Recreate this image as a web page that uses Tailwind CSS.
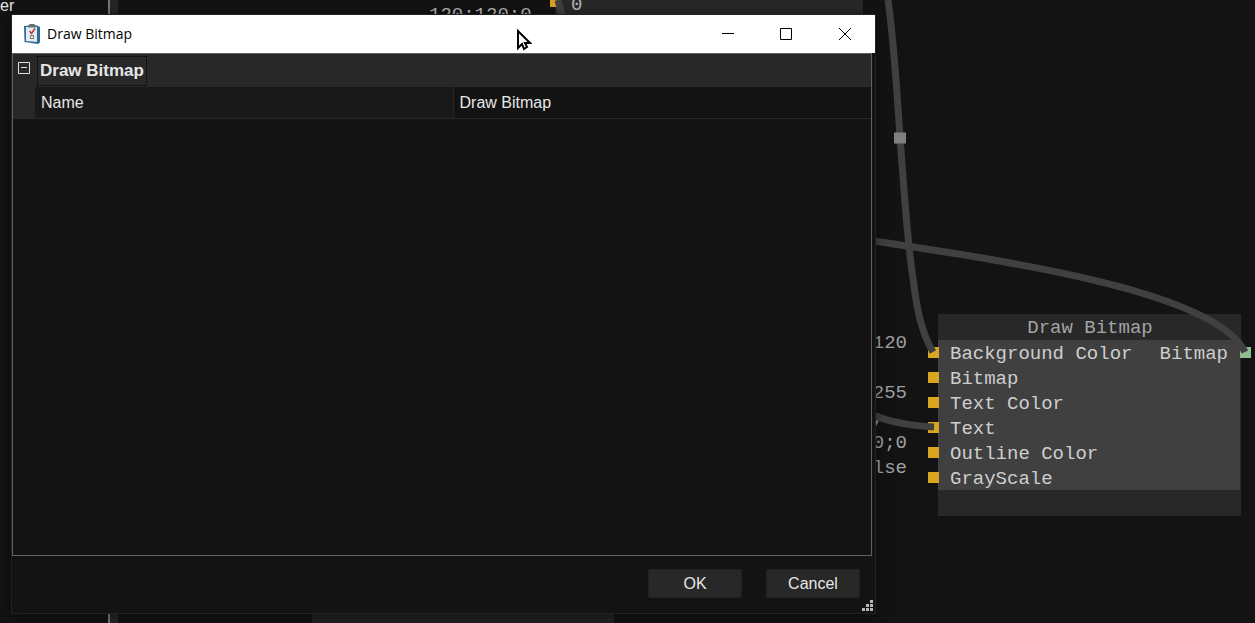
<!DOCTYPE html>
<html lang="en">
<head>
  <meta charset="UTF-8">
  <meta name="viewport" content="width=device-width, initial-scale=1">
  <title>Draw Bitmap</title>
  <script src="https://cdn.jsdelivr.net/npm/@tailwindcss/browser@4"></script>
</head>
<body class="bg-[#131313] text-[#e6e6e6] font-['Liberation_Sans',sans-serif]">
  <div class="relative h-screen overflow-hidden">

    <!-- side panel and splitter -->
    <aside class="absolute inset-y-0 left-0 flex">
      <div class="w-[108px] text-base leading-3">er</div>
      <div class="w-[10px] bg-[#262626] border-l-2 border-[#77777c]"></div>
    </aside>

    <!-- node graph -->
    <main class="font-['Liberation_Mono',monospace] text-[19px] leading-[25px] text-[#b4b4b4]">
      <section class="absolute left-[555px] top-0 h-8 w-[308px] bg-[#282828] pl-4"><p class="leading-[10px]">0</p></section>
      <p class="absolute left-[429px] top-[3px]">120;120;0</p>
      <span class="absolute left-[550px] -top-1 size-[11px] bg-[#daa520]"></span>
      <section class="absolute left-[312px] top-[600px] h-8 w-[302px] bg-[#222]"></section>

      <ul class="absolute right-[348px] top-[331px] text-right text-[#a0a0a0]">
        <li>120;120;120</li>
        <li class="h-[25px]"></li>
        <li>255;255;255</li>
        <li class="pr-6">;</li>
        <li>0;0;0</li>
        <li>False</li>
      </ul>

      <section class="absolute left-[938px] top-[314px] w-[303px] bg-[#282828] pb-[26px] pr-px">
        <h2 class="pt-[3px] pl-0.5 text-center leading-[23px] text-[#a4a4a4]">Draw Bitmap</h2>
        <div class="flex h-[150px] justify-between bg-[#404040] px-3 pt-0.5 text-[#cecece]">
          <ul>
            <li>Background Color</li>
            <li>Bitmap</li>
            <li>Text Color</li>
            <li>Text</li>
            <li>Outline Color</li>
            <li>GrayScale</li>
          </ul>
          <p>Bitmap</p>
        </div>
      </section>

      <!-- input and output pins -->
      <div class="absolute left-[928px] top-[347px] flex flex-col gap-[14px]">
        <span class="size-[11px] bg-[#daa520]"></span>
        <span class="size-[11px] bg-[#daa520]"></span>
        <span class="size-[11px] bg-[#daa520]"></span>
        <span class="size-[11px] bg-[#daa520]"></span>
        <span class="size-[11px] bg-[#daa520]"></span>
        <span class="size-[11px] bg-[#daa520]"></span>
      </div>
      <span class="absolute left-[1240px] top-[347px] size-[11px] bg-[#8fbc8f]"></span>

      <!-- wires -->
      <svg class="absolute left-0 top-0" width="1255" height="623" fill="none" stroke="#404040" stroke-width="7">
        <path d="M558 0L562 16"/>
        <path d="M888 0C894 42 897 90 900 138C905 200 907 240 913 278C917 312 922 333 933 352"/>
        <path d="M860 239C1000 260 1215 290 1245 352"/>
        <path d="M860 410C880 419 900 425 934 427"/>
        <path d="M894 138H906" stroke="#808080" stroke-width="11"/>
      </svg>
    </main>

    <!-- dialog -->
    <div role="dialog" aria-labelledby="dialogTitle" class="absolute left-3 top-[15px] right-[380px] bottom-[10px] flex flex-col bg-[#131313] outline outline-[#222] shadow-[0_2px_14px_rgba(0,0,0,0.5)]">
      <header class="flex h-[38px] shrink-0 items-center bg-white text-black">
        <svg class="ml-3 mr-[7px]" width="16" height="20" viewBox="0 0 16 20">
          <path d="M0 2L13 1.500L16 3V18.500L14 20L0.500 18Z" fill="#2c6a9c"/>
          <path d="M2 3H13V18L2 17Z" fill="#e4ebf0"/>
          <path d="M4 3V1.500L6 0H10L12 1.500V3.500H4Z" fill="#66717a"/>
          <path d="M5.500 7L7.500 9.500L11 4.500" fill="none" stroke="#b5393d" stroke-width="1.500"/>
          <path d="M6.500 11.500H9.500V14.500H6.500Z" fill="none" stroke="#777"/>
        </svg>
        <h1 id="dialogTitle" class="font-['Open_Sans',sans-serif] text-[14px] leading-5">Draw Bitmap</h1>
        <div class="ml-auto flex h-full">
          <button type="button" aria-label="Minimize" class="grid w-[58px] place-items-center">
            <svg width="12" height="12" stroke="black"><path d="M0 5.500H12"/></svg>
          </button>
          <button type="button" aria-label="Maximize" class="grid w-[58px] place-items-center">
            <svg width="12" height="12" fill="none" stroke="black"><path d="M.5 .5H11.500V11.500H.5Z"/></svg>
          </button>
          <button type="button" aria-label="Close" class="grid w-[60px] place-items-center">
            <svg width="12" height="12" stroke="black"><path d="M0 0L12 12M12 0L0 12"/></svg>
          </button>
        </div>
      </header>

      <div class="mr-[3px] flex-1 border border-[#606060]">
        <div class="flex h-[33px] items-start bg-[#282828]">
          <button type="button" aria-label="Collapse" class="ml-[5px] mt-2">
            <svg class="block" width="12" height="12" fill="none" stroke="#e0e0e0"><path d="M.5 .5H11.500V11.500H.5ZM3 5.500H9"/></svg>
          </button>
          <h2 class="ml-[7px] mt-0.5 border border-dotted border-black px-[2px] text-[17px] leading-[28px] font-bold">Draw Bitmap</h2>
        </div>
        <table class="w-full table-fixed border-b border-[#282828] text-base leading-[30px]">
          <tr>
            <td class="w-[22px] bg-[#282828]"></td>
            <th scope="row" class="bg-[#191919] pl-[6px] pt-px text-left font-normal"><label for="nodeName">Name</label></th>
            <td class="border-l border-[#282828] pl-[6px] pt-px"><input id="nodeName" type="text" value="Draw Bitmap" class="block w-full bg-transparent outline-none"></td>
          </tr>
        </table>
      </div>

      <footer class="flex h-[57px] shrink-0 justify-end gap-6 pr-[15px] pt-[13px] text-base">
        <button type="button" class="h-[29px] w-[94px] border border-[#202020] bg-[#282828]">OK</button>
        <button type="button" class="h-[29px] w-[94px] border border-[#202020] bg-[#282828]">Cancel</button>
      </footer>
      <svg class="absolute bottom-[2px] right-[2px]" width="11" height="11" fill="#b8b8b8">
        <path d="M8 0h3v3h-3zM4 4h3v3h-3zM8 4h3v3h-3zM0 8h3v3h-3zM4 8h3v3h-3zM8 8h3v3h-3z"/>
      </svg>
    </div>

    <!-- mouse pointer -->
    <svg class="absolute left-[516px] top-[29px]" width="16" height="22" fill="white" stroke="black" stroke-width="2">
      <path d="M2 2V19L6 15L8 20L11 18L9 14H14Z"/>
    </svg>
  </div>
</body>
</html>
